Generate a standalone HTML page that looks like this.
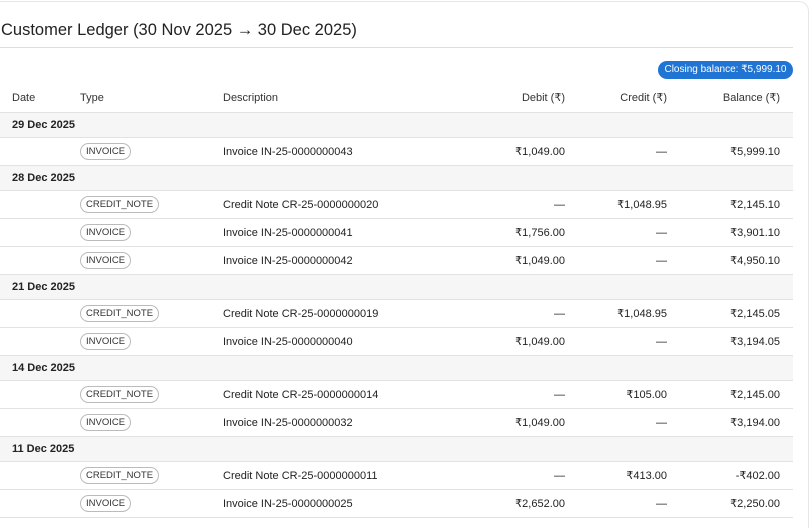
<!DOCTYPE html>
<html><head><meta charset="utf-8"><style>
*{box-sizing:border-box;margin:0;padding:0}
html{width:811px;height:528px;overflow:hidden}
body{width:811px;height:528px;background:#fff;font-family:"Liberation Sans",sans-serif;color:#222;overflow:hidden;position:relative}
.card{position:absolute;left:-10px;top:1px;width:819px;height:527px;border:1px solid #e6e6e6;border-bottom:none;border-radius:10px 10px 0 0}
.title{position:absolute;left:1px;top:21px;font-size:16.5px;color:#222}
.hr{position:absolute;left:0;top:47px;width:793px;border-top:1px solid #ddd}
.badge{position:absolute;left:658px;top:61px;width:135px;height:18px;background:#1f74d4;color:#fff;border-radius:9px;font-size:10px;line-height:18px;text-align:center}
table{position:absolute;left:0;top:84px;width:793px;border-collapse:collapse;font-size:11px;table-layout:fixed}
td,th{padding:0;font-weight:normal;text-align:left;border-bottom:1px solid #e2e2e2;white-space:nowrap;vertical-align:middle}
th{height:28px;color:#333}
tr.g td{height:25px;background:#f6f6f6;font-weight:bold;padding-left:12px}
tr.r td{height:28px;padding-top:1px}
.c1{padding-left:12px;width:80px}
.c2{width:143px}
.c3{width:252px}
.r{text-align:right}
.d{width:90px}
.cr{width:102px}
.b{width:126px;padding-right:13px}
.pill{display:inline-block;border:1px solid #bbb;border-radius:9px;padding:0 5px;height:17px;line-height:15px;font-size:9.5px;color:#333;vertical-align:middle}
</style></head><body>
<div class="card"></div>
<div class="title">Customer Ledger (30 Nov 2025 → 30 Dec 2025)</div>
<div class="hr"></div>
<div class="badge">Closing balance: ₹5,999.10</div>
<table>
<tr><th class="c1">Date</th><th class="c2">Type</th><th class="c3">Description</th><th class="r d">Debit (₹)</th><th class="r cr">Credit (₹)</th><th class="r b">Balance (₹)</th></tr>
<tr class="g"><td colspan="6">29 Dec 2025</td></tr>
<tr class="r"><td></td><td><span class="pill">INVOICE</span></td><td>Invoice IN-25-0000000043</td><td class="r">₹1,049.00</td><td class="r">—</td><td class="r b">₹5,999.10</td></tr>
<tr class="g"><td colspan="6">28 Dec 2025</td></tr>
<tr class="r"><td></td><td><span class="pill">CREDIT_NOTE</span></td><td>Credit Note CR-25-0000000020</td><td class="r">—</td><td class="r">₹1,048.95</td><td class="r b">₹2,145.10</td></tr>
<tr class="r"><td></td><td><span class="pill">INVOICE</span></td><td>Invoice IN-25-0000000041</td><td class="r">₹1,756.00</td><td class="r">—</td><td class="r b">₹3,901.10</td></tr>
<tr class="r"><td></td><td><span class="pill">INVOICE</span></td><td>Invoice IN-25-0000000042</td><td class="r">₹1,049.00</td><td class="r">—</td><td class="r b">₹4,950.10</td></tr>
<tr class="g"><td colspan="6">21 Dec 2025</td></tr>
<tr class="r"><td></td><td><span class="pill">CREDIT_NOTE</span></td><td>Credit Note CR-25-0000000019</td><td class="r">—</td><td class="r">₹1,048.95</td><td class="r b">₹2,145.05</td></tr>
<tr class="r"><td></td><td><span class="pill">INVOICE</span></td><td>Invoice IN-25-0000000040</td><td class="r">₹1,049.00</td><td class="r">—</td><td class="r b">₹3,194.05</td></tr>
<tr class="g"><td colspan="6">14 Dec 2025</td></tr>
<tr class="r"><td></td><td><span class="pill">CREDIT_NOTE</span></td><td>Credit Note CR-25-0000000014</td><td class="r">—</td><td class="r">₹105.00</td><td class="r b">₹2,145.00</td></tr>
<tr class="r"><td></td><td><span class="pill">INVOICE</span></td><td>Invoice IN-25-0000000032</td><td class="r">₹1,049.00</td><td class="r">—</td><td class="r b">₹3,194.00</td></tr>
<tr class="g"><td colspan="6">11 Dec 2025</td></tr>
<tr class="r"><td></td><td><span class="pill">CREDIT_NOTE</span></td><td>Credit Note CR-25-0000000011</td><td class="r">—</td><td class="r">₹413.00</td><td class="r b">-₹402.00</td></tr>
<tr class="r"><td></td><td><span class="pill">INVOICE</span></td><td>Invoice IN-25-0000000025</td><td class="r">₹2,652.00</td><td class="r">—</td><td class="r b">₹2,250.00</td></tr>
</table>
</body></html>
